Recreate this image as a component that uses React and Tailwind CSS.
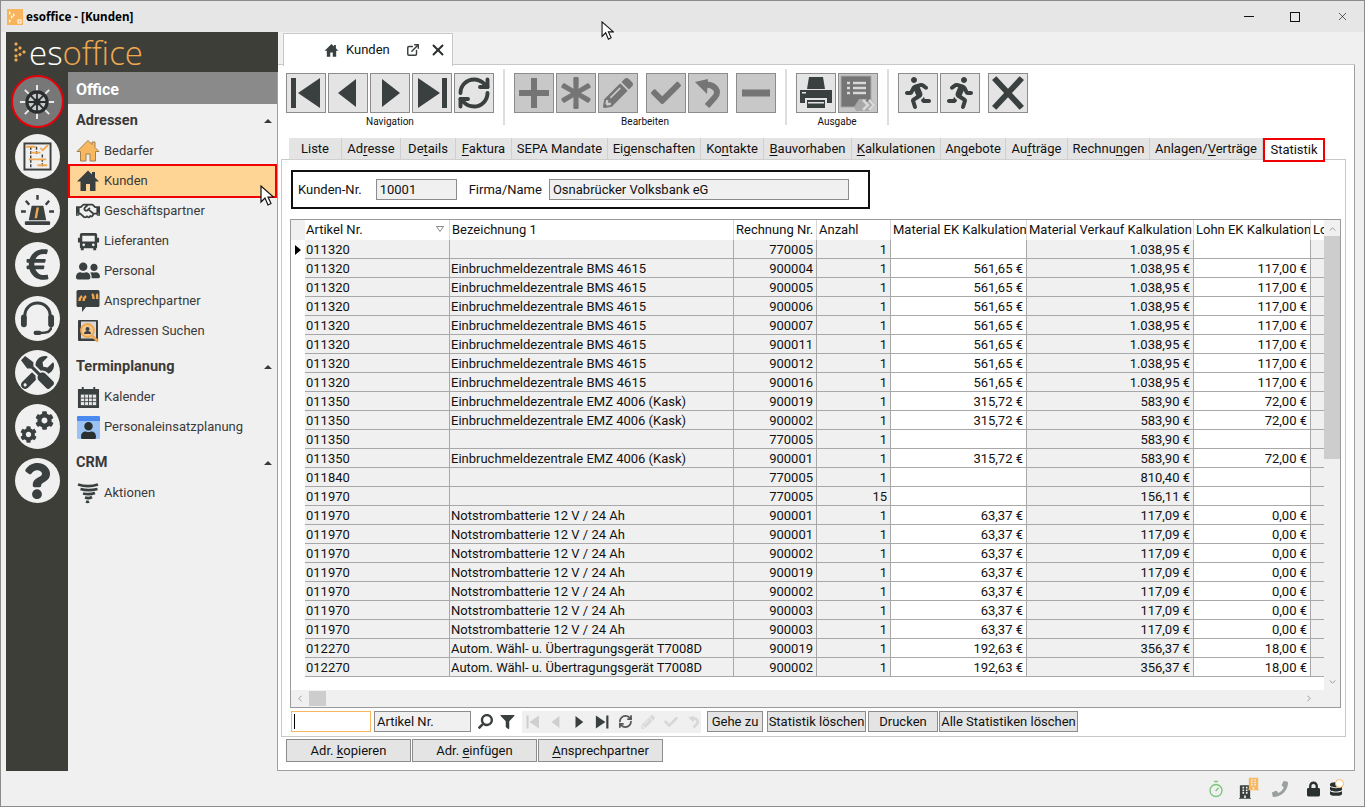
import { ExternalLink, RefreshCw, Timer, X } from 'lucide-react';
import {
  FaAsterisk, FaBuilding, FaCheck, FaCog, FaDatabase, FaEuroSign, FaFilter, FaLock, FaPencilAlt, FaPhoneAlt,
  FaQuestion, FaRegHandshake, FaRunning, FaSearch, FaTools, FaUser, FaUserFriends,
} from 'react-icons/fa';

const font = "font-['Roboto','Liberation_Sans',sans-serif]";

// "&" marks the mnemonic letter, like in the win forms captions
function Mn({ text }) {
  const i = text.indexOf('&');
  if (i < 0) return text;
  return (
    <>
      {text.slice(0, i)}
      <span className="underline underline-offset-2">{text[i + 1]}</span>
      {text.slice(i + 2)}
    </>
  );
}

const NavFirst = ({ className }) => (
  <svg viewBox="0 0 32 32" className={className} fill="currentColor"><rect x="1" y="1" width="5" height="30" /><path d="M30 1v30L8 16z" /></svg>
);
const NavPrev = ({ className }) => (
  <svg viewBox="0 0 32 32" className={className} fill="currentColor"><path d="M24 2v28L6 16z" /></svg>
);
const NavNext = ({ className }) => (
  <svg viewBox="0 0 32 32" className={className} fill="currentColor"><path d="M8 2v28l18-14z" /></svg>
);
const NavLast = ({ className }) => (
  <svg viewBox="0 0 32 32" className={className} fill="currentColor"><rect x="26" y="1" width="5" height="30" /><path d="M2 1v30l22-15z" /></svg>
);

const Home = ({ className, fill = 'currentColor', stroke }) => (
  <svg viewBox="0 0 24 24" className={className}>
    <path d="M12 1.500L1 12.500h3.500v9.500h5.500v-7h4v7h5.500v-9.500H23l-4-4V3h-3v2.500z" fill={fill} stroke={stroke} />
  </svg>
);

const PlusIcon = () => (
  <svg viewBox="0 0 32 32" className="w-[32px] h-[32px]" fill="currentColor"><path d="M13 1h6v12h12v6H19v12h-6V19H1v-6h12z" /></svg>
);
const MinusIcon = () => (
  <svg viewBox="0 0 32 32" className="w-[32px] h-[32px]" fill="currentColor"><rect x="2" y="12.500" width="28" height="7" /></svg>
);
const UndoIcon = ({ className = 'w-[32px] h-[32px]' }) => (
  <svg viewBox="0 0 32 32" className={className} fill="none">
    <path d="M3 5l13-3-1 15z" fill="currentColor" />
    <path d="M12 8C23 6 28 15 23 20l-8 9" stroke="currentColor" strokeWidth="6" />
  </svg>
);
const PrinterIcon = () => (
  <svg viewBox="0 0 34 34" className="w-[34px] h-[34px]" fill="currentColor">
    <path d="M10 1h14l2 12H8z" />
    <path d="M1 14h32v13h-5v-5H6v5H1z" />
    <rect x="3" y="16" width="4" height="1.500" fill="#e4e4e4" />
    <path d="M8 24h18v8H8z" />
    <rect x="9" y="26" width="16" height="1.500" fill="#e4e4e4" />
  </svg>
);
const CrossIcon = () => (
  <svg viewBox="0 0 32 32" className="w-[34px] h-[34px]" fill="none"><path d="M3 2l26 28M29 2L3 30" stroke="currentColor" strokeWidth="5.500" /></svg>
);
const ListOut = () => (
  <svg viewBox="0 0 36 36" className="w-[36px] h-[36px]">
    <rect x="1" y="1" width="30" height="31" fill="#757575" stroke="#a8a8a8" />
    <path d="M7 8h3M13 8h13M7 13h3M13 13h13M7 18h3M13 18h13" stroke="#d8d8d8" strokeWidth="2.500" />
    <path d="M14 32l5-8 8 0-2 4 6-4 5 6-6 6H16z" fill="#a8a8a8" />
    <path d="M23 25l5 5-5 5M29 25l5 5-5 5" stroke="#d8d8d8" strokeWidth="2.500" fill="none" />
  </svg>
);

function ToolBtn({ off, children }) {
  return (
    <div className={`w-[40px] h-[40px] border border-[#8c8c8c] flex items-center justify-center ${off ? 'bg-[#c8c8c8] text-[#757575]' : 'bg-[#e4e4e4] text-[#3a3f3f]'}`}>
      {children}
    </div>
  );
}

function ToolGroup({ label, children }) {
  return (
    <div className="flex flex-col items-center">
      <div className="flex">{children}</div>
      {label && <div className="mt-[3px] text-[10px] leading-[12px] text-[#111]">{label}</div>}
    </div>
  );
}

const Sep = () => <div className="w-[2px] h-[56px] -mt-[4px] bg-[#dedede] mx-[9px]" />;

const TruckIcon = () => (
  <svg viewBox="0 0 24 24" className="w-[23px] h-[23px]" fill="#3a3f3f">
    <path d="M5 3h14a2 2 0 0 1 2 2v3h2v5h-2v5a1 1 0 0 1-1 1v2h-3v-2H7v2H4v-2a1 1 0 0 1-1-1v-5H1V8h2V5a2 2 0 0 1 2-2z" />
    <rect x="5.500" y="6" width="13" height="6" fill="#f0f0f0" />
    <circle cx="7" cy="15.500" r="1.400" fill="#f0f0f0" />
    <circle cx="17" cy="15.500" r="1.400" fill="#f0f0f0" />
  </svg>
);
const QuoteIcon = () => (
  <svg viewBox="0 0 24 24" className="w-[24px] h-[24px]">
    <path d="M2 1h20a1.500 1.500 0 0 1 1.500 1.500v14a1.500 1.500 0 0 1-1.500 1.500H10l-4 5v-5H2a1.500 1.500 0 0 1-1.500-1.500v-14A1.500 1.500 0 0 1 2 1z" fill="#3a3f3f" />
    <path d="M6 7Q3.500 9 3.500 12M10 7Q7.500 9 7.500 12M16 5q1.500 1 1.500 5M20.500 5q1 1 .5 5" stroke="#f0a850" strokeWidth="2.400" fill="none" />
  </svg>
);
const BookSearch = () => (
  <svg viewBox="0 0 24 24" className="w-[24px] h-[24px]">
    <rect x="2" y="1" width="20" height="21" rx="1" fill="#3a3f3f" />
    <rect x="5" y="2.500" width="15" height="17" fill="#d8d8d8" />
    <circle cx="11.500" cy="11.500" r="6.500" fill="#f4c88c" stroke="#f0a850" strokeWidth="1.800" />
    <circle cx="11.500" cy="10" r="2" fill="#3a3f3f" />
    <path d="M8 15a3.500 3 0 0 1 7 0z" fill="#3a3f3f" />
    <path d="M16 16.500l6 6" stroke="#f0a850" strokeWidth="2.500" />
  </svg>
);
const CalIcon = () => (
  <svg viewBox="0 0 24 24" className="w-[23px] h-[23px]">
    <path d="M1 3h4V1h2v2h10V1h2v2h4v20H1z" fill="#3a3f3f" />
    <path d="M4 9h16v11H4z" fill="#e8e8e8" />
    <path d="M8 9v11M12 9v11M16 9v11M4 12.700h16M4 16.300h16" stroke="#3a3f3f" strokeWidth=".9" />
  </svg>
);
const BlueCal = () => (
  <div className="relative w-[23px] h-[23px] bg-[#9cc2f4] rounded-[1px] flex items-end justify-center border-t-[5px] border-[#4a8af0] overflow-hidden">
    <FaUser className="w-[17px] h-[17px] text-[#2a2f2f]" />
  </div>
);
const TwisterIcon = () => (
  <svg viewBox="0 0 24 24" className="w-[24px] h-[24px]" fill="none" stroke="#3a3f3f" strokeWidth="2.700">
    <path d="M2 3.500c6 2 14 2 20 0M4.500 8c5 1.500 11 1.500 17 0M7 12.500c4 1 8 1 12-.5M9 16.500c2 .7 5 .7 7-.5M10 20.500c1 .4 2 .4 3-.2" />
  </svg>
);

const menu = [
  {
    title: 'Adressen',
    items: [
      { label: 'Bedarfer', icon: <Home className="w-[24px] h-[24px]" fill="#f8b860" stroke="#a08050" /> },
      { label: 'Kunden', active: true, icon: <Home className="w-[24px] h-[24px] text-[#3a3f3f]" /> },
      { label: 'Geschäftspartner', icon: <FaRegHandshake className="w-[24px] h-[24px] text-[#3a3f3f]" /> },
      { label: 'Lieferanten', icon: <TruckIcon /> },
      { label: 'Personal', icon: <FaUserFriends className="w-[24px] h-[24px] text-[#3a3f3f]" /> },
      { label: 'Ansprechpartner', icon: <QuoteIcon /> },
      { label: 'Adressen Suchen', icon: <BookSearch /> },
    ],
  },
  {
    title: 'Terminplanung',
    items: [
      { label: 'Kalender', icon: <CalIcon /> },
      { label: 'Personaleinsatzplanung', icon: <BlueCal /> },
    ],
  },
  {
    title: 'CRM',
    items: [{ label: 'Aktionen', icon: <TwisterIcon /> }],
  },
];

const Helm = () => (
  <svg viewBox="0 0 40 40" className="w-[36px] h-[36px]">
    <path d="M20 1v38M1 20h38M6.500 6.500l27 27M33.500 6.500l-27 27" stroke="#e8e8e8" strokeWidth="2.200" />
    <circle cx="20" cy="20" r="13" fill="#2a2e2e" />
    <circle cx="20" cy="20" r="9.500" fill="#c8c8c8" />
    <path d="M20 9v22M9 20h22M12.200 12.200l15.600 15.600M27.800 12.200L12.200 27.800" stroke="#2a2e2e" strokeWidth="2" />
    <circle cx="20" cy="20" r="4" fill="#2a2e2e" />
  </svg>
);
const BoardIcon = () => (
  <svg viewBox="0 0 30 30" className="w-[29px] h-[29px]">
    <rect x="1.500" y="1.500" width="27" height="27" fill="none" stroke="#3a3f3f" strokeWidth="2" />
    <path d="M8 5v21M14 5v8M20 13v13" stroke="#3a3f3f" strokeWidth="1.500" strokeDasharray="3 1.500" />
    <path d="M3 5h10M8 11h10M6 18h18M15 24h10" stroke="#f0a850" strokeWidth="2" />
    <path d="M18 6l2.500 2.500L26 3" stroke="#f0a850" strokeWidth="1.800" fill="none" />
  </svg>
);
const Siren = () => (
  <svg viewBox="0 0 34 34" className="w-[33px] h-[33px]">
    <path d="M17 1v5M5 7l3.500 4M29 7l-3.500 4M0 18h5M29 18h5" stroke="#3a3f3f" strokeWidth="2.500" />
    <path d="M11 12h12l3 15H8z" fill="#3a3f3f" />
    <path d="M16 14l-2 11h2.500l2-11z" fill="#f0a850" />
    <rect x="4" y="28" width="26" height="4" rx="1" fill="#3a3f3f" />
  </svg>
);
const Headset = () => (
  <svg viewBox="0 0 36 36" className="w-[35px] h-[35px]" fill="none">
    <path d="M5 18V15a13 13 0 0 1 26 0v3" stroke="#3a3f3f" strokeWidth="3" />
    <rect x="1" y="14" width="6" height="13" rx="3" fill="#3a3f3f" />
    <rect x="29" y="14" width="6" height="13" rx="3" fill="#3a3f3f" />
    <path d="M32 27c0 4-4 6-11 6" stroke="#3a3f3f" strokeWidth="2.500" />
    <rect x="14" y="30.500" width="8" height="4.500" rx="2" fill="#3a3f3f" />
  </svg>
);
const Gears = () => (
  <div className="flex w-[34px] h-[32px] text-[#3a3f3f]">
    <FaCog className="w-[17px] h-[17px] self-end shrink-0" />
    <FaCog className="w-[19px] h-[19px] self-start -ml-[2px] shrink-0" />
  </div>
);

const railIcons = [
  <BoardIcon key="a" />,
  <Siren key="b" />,
  <FaEuroSign key="c" className="w-[35px] h-[35px] text-[#3a3f3f]" />,
  <Headset key="d" />,
  <FaTools key="e" className="w-[33px] h-[33px] text-[#3a3f3f]" />,
  <Gears key="f" />,
  <FaQuestion key="g" className="w-[28px] h-[36px] text-[#3a3f3f]" />,
];

const topTabs = ['Liste', 'Ad&resse', 'De&tails', '&Faktura', 'SEPA Mandate', 'Ei&genschaften', 'Ko&ntakte', '&Bauvorhaben', '&Kalkulationen', 'An&gebote', 'Au&fträge', 'Rechnu&ngen', 'Anlagen/&Verträge'];
const tabWidths = ['w-[53px]', 'w-[59px]', 'w-[55px]', 'w-[56px]', 'w-[96px]', 'w-[93px]', 'w-[63px]', 'w-[88px]', 'w-[89px]', 'w-[65px]', 'w-[62px]', 'w-[82px]', 'w-[113px]'];

const bms = 'Einbruchmeldezentrale BMS 4615';
const emz = 'Einbruchmeldezentrale EMZ 4006 (Kask)';
const nst = 'Notstrombatterie 12 V / 24 Ah';
const aut = 'Autom. Wähl- u. Übertragungsgerät T7008D';

const rows = [
  ['011320', '', '770005', '1', '', '1.038,95 €', ''],
  ['011320', bms, '900004', '1', '561,65 €', '1.038,95 €', '117,00 €'],
  ['011320', bms, '900005', '1', '561,65 €', '1.038,95 €', '117,00 €'],
  ['011320', bms, '900006', '1', '561,65 €', '1.038,95 €', '117,00 €'],
  ['011320', bms, '900007', '1', '561,65 €', '1.038,95 €', '117,00 €'],
  ['011320', bms, '900011', '1', '561,65 €', '1.038,95 €', '117,00 €'],
  ['011320', bms, '900012', '1', '561,65 €', '1.038,95 €', '117,00 €'],
  ['011320', bms, '900016', '1', '561,65 €', '1.038,95 €', '117,00 €'],
  ['011350', emz, '900019', '1', '315,72 €', '583,90 €', '72,00 €'],
  ['011350', emz, '900002', '1', '315,72 €', '583,90 €', '72,00 €'],
  ['011350', '', '770005', '1', '', '583,90 €', ''],
  ['011350', emz, '900001', '1', '315,72 €', '583,90 €', '72,00 €'],
  ['011840', '', '770005', '1', '', '810,40 €', ''],
  ['011970', '', '770005', '15', '', '156,11 €', ''],
  ['011970', nst, '900001', '1', '63,37 €', '117,09 €', '0,00 €'],
  ['011970', nst, '900001', '1', '63,37 €', '117,09 €', '0,00 €'],
  ['011970', nst, '900002', '1', '63,37 €', '117,09 €', '0,00 €'],
  ['011970', nst, '900019', '1', '63,37 €', '117,09 €', '0,00 €'],
  ['011970', nst, '900002', '1', '63,37 €', '117,09 €', '0,00 €'],
  ['011970', nst, '900003', '1', '63,37 €', '117,09 €', '0,00 €'],
  ['011970', nst, '900003', '1', '63,37 €', '117,09 €', '0,00 €'],
  ['012270', aut, '900019', '1', '192,63 €', '356,37 €', '18,00 €'],
  ['012270', aut, '900002', '1', '192,63 €', '356,37 €', '18,00 €'],
];

const gridCols = 'grid grid-cols-[14px_145px_284px_83px_74px_136px_167px_117px_13px]';
const cell = 'h-[19px] leading-[20px] pl-[1px] pr-[3px] border-b border-r border-[#a8a8a8] whitespace-nowrap overflow-hidden';
const head = 'px-[2px] border-r border-[#d8d8d8] leading-[19px] whitespace-nowrap overflow-hidden';

function Row({ r, first }) {
  return (
    <div className={`${gridCols} text-[13px] text-[#111]`}>
      <div className="h-[19px] flex items-center justify-center text-black">
        {first && <svg viewBox="0 0 6 10" className="w-[6px] h-[10px]"><path d="M0 0l6 5-6 5z" fill="currentColor" /></svg>}
      </div>
      <div className={`${cell} bg-[#f0f0f0]`}>{r[0]}</div>
      <div className={`${cell} bg-[#f0f0f0]`}>{r[1]}</div>
      <div className={`${cell} bg-[#f0f0f0] text-right`}>{r[2]}</div>
      <div className={`${cell} bg-[#f0f0f0] text-right`}>{r[3]}</div>
      <div className={`${cell} bg-white text-right`}>{r[4]}</div>
      <div className={`${cell} bg-[#f0f0f0] text-right`}>{r[5]}</div>
      <div className={`${cell} bg-white text-right`}>{r[6]}</div>
      <div className="h-[19px] bg-[#f0f0f0] border-b border-[#a8a8a8]" />
    </div>
  );
}

function SmallBtn({ w, children, className = '' }) {
  return (
    <div className={`${w} h-full bg-[#e4e4e4] border border-[#8c8c8c] flex items-center justify-center whitespace-nowrap text-[13px] text-[#111] ${className}`}>
      {children}
    </div>
  );
}

const Cursor = ({ className }) => (
  <svg viewBox="0 0 14 22" className={className}>
    <path d="M1 1v16l4-4 3 7 3-1.500-3-6.500h5.500z" fill="#fff" stroke="#111" strokeWidth="1.200" />
  </svg>
);

export default function App() {
  return (
    <div className={`${font} relative w-[1365px] h-[807px] overflow-hidden bg-[#f0f0f0] border border-[#8c8c8c] flex flex-col`}>
      {/* title bar */}
      <div className="h-[31px] bg-[#e6e6e6] flex items-center pl-[6px] pr-[8px] shrink-0">
        <svg viewBox="0 0 16 16" className="w-[16px] h-[16px]">
          <rect width="16" height="16" fill="#f8b45c" />
          <path d="M2 2l2 2-2 2zM4 6l2 2-2 2zM2 10l2 2-2 2zM6 4l2 2-2 2z" fill="#fff" />
          <rect x="11" y="11" width="3" height="3" fill="none" stroke="#fff" />
        </svg>
        <span className="ml-[3px] text-[11.6px] font-bold text-black font-['Noto_Sans',sans-serif]">esoffice - [Kunden]</span>
        <div className="ml-auto flex items-center gap-[36px] text-[#111] pr-[7px]">
          <div className="w-[10px] h-[1px] bg-[#111]" />
          <div className="w-[10px] h-[10px] border border-[#111]" />
          <X className="w-[13px] h-[13px]" strokeWidth={1.200} />
        </div>
      </div>

      <div className="flex h-[739px] pl-[5px] shrink-0">
        {/* sidebar */}
        <aside className="w-[272px] bg-[#3e3e38] flex flex-col shrink-0 h-full">
          <div className="h-[40px] flex items-center pl-[8px] shrink-0">
            <svg viewBox="0 0 14 20" className="w-[14px] h-[20px]" fill="#f0a850">
              <path d="M2 0l2 2-2 2-2-2zM6 4l2 2-2 2-2-2zM2 6l2 2-2 2-2-2zM10 8l2 2-2 2-2-2zM6 10.500l2 2-2 2-2-2zM2 12l2 2-2 2-2-2zM2 16l2 2-2 2-2-2z" />
            </svg>
            <span className="ml-[1px] text-[33px] leading-none font-light font-['Open_Sans',sans-serif]">
              <span className="text-white">es</span>
              <span className="text-[#f0a850]">office</span>
            </span>
          </div>
          <div className="flex flex-1">
            <div className="w-[62px] flex flex-col items-center pt-[3px] gap-[9px]">
              <div className="w-[53px] h-[53px] -mb-[3px] rounded-full border-[2.5px] border-[#e8000a] bg-[#777777] flex items-center justify-center">
                <Helm />
              </div>
              {railIcons.map((ic, i) => (
                <div key={i} className="w-[45px] h-[45px] rounded-full bg-[#f0f0f0] flex items-center justify-center">{ic}</div>
              ))}
            </div>
            <nav className="flex-1 bg-[#f0f0f0] border-r border-[#a0a0a0]">
              <div className="h-[32px] bg-[#8a8a8a] text-white font-bold text-[16px] flex items-center pl-[8px] pt-[3px]">Office</div>
              <div className="pt-[2px]">
                {menu.map((sec, si) => (
                  <div key={sec.title} className={si > 0 ? 'mt-[6px]' : ''}>
                    <div className="h-[30px] flex items-center pl-[8px] pr-[5px] text-[#3a3a3a] font-bold text-[14.5px]">
                      {sec.title}
                      <span className="ml-auto w-0 h-0 border-x-[4px] border-x-transparent border-b-[4px] border-b-[#3a3a3a]" />
                    </div>
                    {sec.items.map((it) =>
                      it.active ? (
                        <div key={it.label} className="relative z-10 h-[34px] -mt-[2px] -mb-[2px] w-[209px] bg-[#ffd596] border-[2px] border-[#f00000] flex items-center pl-[6px] gap-[4px] text-[13px] text-[#3a3a3a]">
                          <span className="w-[24px] flex justify-center">{it.icon}</span>
                          {it.label}
                        </div>
                      ) : (
                        <div key={it.label} className="h-[30px] flex items-center pl-[8px] gap-[4px] text-[13px] text-[#3a3a3a]">
                          <span className="w-[24px] flex justify-center">{it.icon}</span>
                          {it.label}
                        </div>
                      ),
                    )}
                  </div>
                ))}
              </div>
            </nav>
          </div>
        </aside>

        {/* main */}
        <main className="flex-1 mr-[9px] flex flex-col min-w-0">
          <div className="h-[33px] shrink-0 pl-[5px] pt-[1px] border-b border-[#c8c8c8] flex">
            <div className="w-[170px] h-[33px] bg-white border border-b-0 border-[#c8c8c8] flex items-center pl-[40px] text-[13px] text-[#111] relative z-10">
              <Home className="w-[15px] h-[15px] text-[#3a3f3f]" />
              <span className="ml-[7px]">Kunden</span>
              <ExternalLink className="ml-[16px] w-[14px] h-[14px] text-[#3a3f3f]" strokeWidth={2.500} />
              <X className="ml-[9px] w-[18px] h-[18px] text-[#2a2f2f]" strokeWidth={2.500} />
            </div>
          </div>

          <div className="flex-1 bg-white border-r border-b border-[#a0a0a0] pl-[3px] pr-[8px] flex flex-col">
            {/* toolbar */}
            <div className="h-[73px] pt-[8px] pl-[5px] flex items-start shrink-0">
              <ToolGroup label="Navigation">
                <div className="flex gap-[2px]">
                  <ToolBtn><NavFirst className="w-[32px] h-[32px]" /></ToolBtn>
                  <ToolBtn><NavPrev className="w-[32px] h-[32px]" /></ToolBtn>
                  <ToolBtn><NavNext className="w-[32px] h-[32px]" /></ToolBtn>
                  <ToolBtn><NavLast className="w-[32px] h-[32px]" /></ToolBtn>
                  <ToolBtn><RefreshCw className="w-[36px] h-[36px]" strokeWidth={2.600} /></ToolBtn>
                </div>
              </ToolGroup>
              <Sep />
              <ToolGroup label="Bearbeiten">
                <div className="flex gap-[2px]">
                  <ToolBtn off><PlusIcon /></ToolBtn>
                  <ToolBtn off><FaAsterisk className="w-[32px] h-[32px]" /></ToolBtn>
                  <ToolBtn off><FaPencilAlt className="w-[30px] h-[30px]" /></ToolBtn>
                  <div className="ml-[6px]"><ToolBtn off><FaCheck className="w-[30px] h-[30px]" /></ToolBtn></div>
                  <ToolBtn off><UndoIcon /></ToolBtn>
                  <div className="ml-[6px]"><ToolBtn off><MinusIcon /></ToolBtn></div>
                </div>
              </ToolGroup>
              <Sep />
              <ToolGroup label="Ausgabe">
                <div className="flex gap-[2px]">
                  <ToolBtn><PrinterIcon /></ToolBtn>
                  <ToolBtn off><ListOut /></ToolBtn>
                </div>
              </ToolGroup>
              <Sep />
              <ToolGroup>
                <div className="flex gap-[2px]">
                  <ToolBtn><FaRunning className="w-[30px] h-[32px] -scale-x-100" /></ToolBtn>
                  <ToolBtn><FaRunning className="w-[30px] h-[32px]" /></ToolBtn>
                  <div className="ml-[6px]"><ToolBtn><CrossIcon /></ToolBtn></div>
                </div>
              </ToolGroup>
            </div>

            {/* tabs */}
            <div className="h-[22px] pl-[8px] flex items-start relative z-10 shrink-0 -mb-[1px]">
              {topTabs.map((t, i) => (
                <div key={t} className={`${tabWidths[i]} h-[22px] bg-[#e4e4e4] border-r border-b border-[#d0d0d0] flex items-center justify-center text-[13px] text-[#111] whitespace-nowrap`}>
                  <span><Mn text={t} /></span>
                </div>
              ))}
              <div className="w-[62px] h-[24px] bg-white border-2 border-[#f00000] flex items-center justify-center text-[13px] text-[#111]">Statistik</div>
            </div>

            {/* tab panel */}
            <div className="w-[1065px] h-[578px] border border-[#c8c8c8] pl-[8px] pt-[10px] shrink-0">
              <div className="ml-[1px] w-[579px] h-[39px] border-2 border-[#111] flex items-center text-[13px] text-[#111]">
                <span className="ml-[5px]">Kunden-Nr.</span>
                <div className="ml-[14px] w-[81px] h-[21px] bg-[#f0f0f0] border border-[#8c8c8c] px-[3px] leading-[19px]">10001</div>
                <span className="ml-[12px]">Firma/Name</span>
                <div className="ml-[7px] w-[300px] h-[21px] bg-[#f0f0f0] border border-[#8c8c8c] px-[3px] leading-[19px]">Osnabrücker Volksbank eG</div>
              </div>

              {/* data grid */}
              <div className="mt-[10px] w-[1051px] h-[489px] border border-[#9a9a9a] flex flex-col">
                <div className="flex-1 flex min-h-0">
                  <div className="w-[1033px]">
                    <div className={`${gridCols} text-[13px] text-[#111] h-[20px]`}>
                      <div className="bg-[#f0f0f0]" />
                      <div className={`relative pl-[1px] ${head}`}>
                        Artikel Nr.
                        <svg viewBox="0 0 8 6" className="absolute right-[5px] top-[6px] w-[8px] h-[6px]"><path d="M.5.500h7L4 5.500z" fill="none" stroke="#888" /></svg>
                      </div>
                      <div className={head}>Bezeichnung 1</div>
                      <div className={head}>Rechnung Nr.</div>
                      <div className={head}>Anzahl</div>
                      <div className={head}>Material EK Kalkulation</div>
                      <div className={head}>Material Verkauf Kalkulation</div>
                      <div className={head}>Lohn EK Kalkulation</div>
                      <div className="px-[2px] leading-[19px] overflow-hidden">Lo</div>
                    </div>
                    {rows.map((r, i) => <Row key={i} r={r} first={i === 0} />)}
                  </div>
                  <div className="w-[17px] bg-[#f0f0f0] flex flex-col items-center text-[#888]">
                    <svg viewBox="0 0 8 5" className="mt-[7px] w-[7px] h-[4px] shrink-0"><path d="M.5 4.500L4 1l3.500 3.500" fill="none" stroke="currentColor" /></svg>
                    <div className="mt-[5px] w-full h-[223px] bg-[#cdcdcd] shrink-0" />
                    <svg viewBox="0 0 8 5" className="mt-auto mb-[6px] w-[7px] h-[4px] shrink-0"><path d="M.5.500L4 4l3.500-3.500" fill="none" stroke="currentColor" /></svg>
                  </div>
                </div>
                <div className="h-[17px] bg-[#f0f0f0] flex items-center shrink-0 text-[#888]">
                  <svg viewBox="0 0 5 8" className="ml-[7px] w-[4px] h-[7px]"><path d="M4.500.500L1 4l3.500 3.500" fill="none" stroke="currentColor" /></svg>
                  <div className="ml-[7px] w-[17px] h-[15px] bg-[#cdcdcd]" />
                  <svg viewBox="0 0 5 8" className="ml-auto mr-[29px] w-[4px] h-[7px]"><path d="M.5.500L4 4 .5 7.500" fill="none" stroke="currentColor" /></svg>
                </div>
              </div>

              {/* grid nav */}
              <div className="mt-[3px] h-[21px] flex items-center text-[13px] text-[#111]">
                <div className="ml-[1px] w-[80px] h-full border border-[#f8b860] flex items-center pl-[2px]">
                  <div className="w-[1px] h-[15px] bg-black" />
                </div>
                <div className="ml-[3px] w-[97px] h-full bg-[#f0f0f0] border border-[#8c8c8c] px-[2px] leading-[19px]">Artikel Nr.</div>
                <FaSearch className="ml-[7px] w-[15px] h-[15px] text-[#3a3f3f] -scale-x-100" />
                <FaFilter className="ml-[7px] w-[15px] h-[14px] text-[#3a3f3f]" />
                <div className="ml-[7px] h-[22px] w-[179px] bg-[#f0f0f0] flex items-center pl-[4px] gap-[9px] shrink-0">
                  <NavFirst className="w-[14px] h-[14px] text-[#cfcfcf]" />
                  <NavPrev className="w-[14px] h-[14px] text-[#cfcfcf]" />
                  <NavNext className="w-[14px] h-[14px] text-[#3a3f3f]" />
                  <NavLast className="w-[14px] h-[14px] text-[#3a3f3f]" />
                  <RefreshCw className="w-[15px] h-[15px] text-[#555]" strokeWidth={2.800} />
                  <FaPencilAlt className="w-[14px] h-[14px] text-[#d8d8d8]" />
                  <FaCheck className="w-[14px] h-[14px] text-[#d8d8d8]" />
                  <UndoIcon className="w-[14px] h-[14px] text-[#d8d8d8]" />
                </div>
                <SmallBtn w="w-[56px]" className="ml-[6px]">Gehe zu</SmallBtn>
                <SmallBtn w="w-[99px]" className="ml-[4px]">Statistik löschen</SmallBtn>
                <SmallBtn w="w-[70px]" className="ml-[2px]">Drucken</SmallBtn>
                <SmallBtn w="w-[139px]" className="ml-[1px]">Alle Statistiken löschen</SmallBtn>
              </div>
            </div>

            {/* address buttons */}
            <div className="mt-[2px] ml-[5px] h-[23px] flex gap-[1px]">
              <SmallBtn w="w-[125px]"><span><Mn text="Adr. &kopieren" /></span></SmallBtn>
              <SmallBtn w="w-[125px]"><span><Mn text="Adr. &einfügen" /></span></SmallBtn>
              <SmallBtn w="w-[125px]"><span><Mn text="&Ansprechpartner" /></span></SmallBtn>
            </div>
          </div>
        </main>
      </div>

      {/* status bar */}
      <div className="flex-1 flex items-center justify-end pr-[20px]">
        <Timer className="w-[18px] h-[18px] text-[#7cc47c]" strokeWidth={1.800} />
        <div className="relative ml-[14px] w-[20px] h-[24px]">
          <FaBuilding className="absolute left-0 bottom-0 w-[12px] h-[18px] text-[#3a3f3f]" />
          <FaBuilding className="absolute right-0 top-0 w-[11px] h-[14px] text-[#f8b860]" />
        </div>
        <FaPhoneAlt className="ml-[13px] w-[16px] h-[16px] text-[#9aa0a0] -scale-x-100" />
        <FaLock className="ml-[19px] w-[13px] h-[16px] text-[#2a2f2f]" />
        <div className="relative ml-[10px] w-[14px] h-[20px]">
          <FaDatabase className="w-[12px] h-[20px] text-[#2a2f2f]" />
          <div className="absolute right-0 top-0 w-[9px] h-[9px] rounded-full border border-[#f8b860] bg-white" />
        </div>
      </div>

      <Cursor className="absolute left-[259px] top-[184px] w-[14px] h-[22px] z-20" />
      <Cursor className="absolute left-[600px] top-[20px] w-[13px] h-[20px] z-20" />
    </div>
  );
}
